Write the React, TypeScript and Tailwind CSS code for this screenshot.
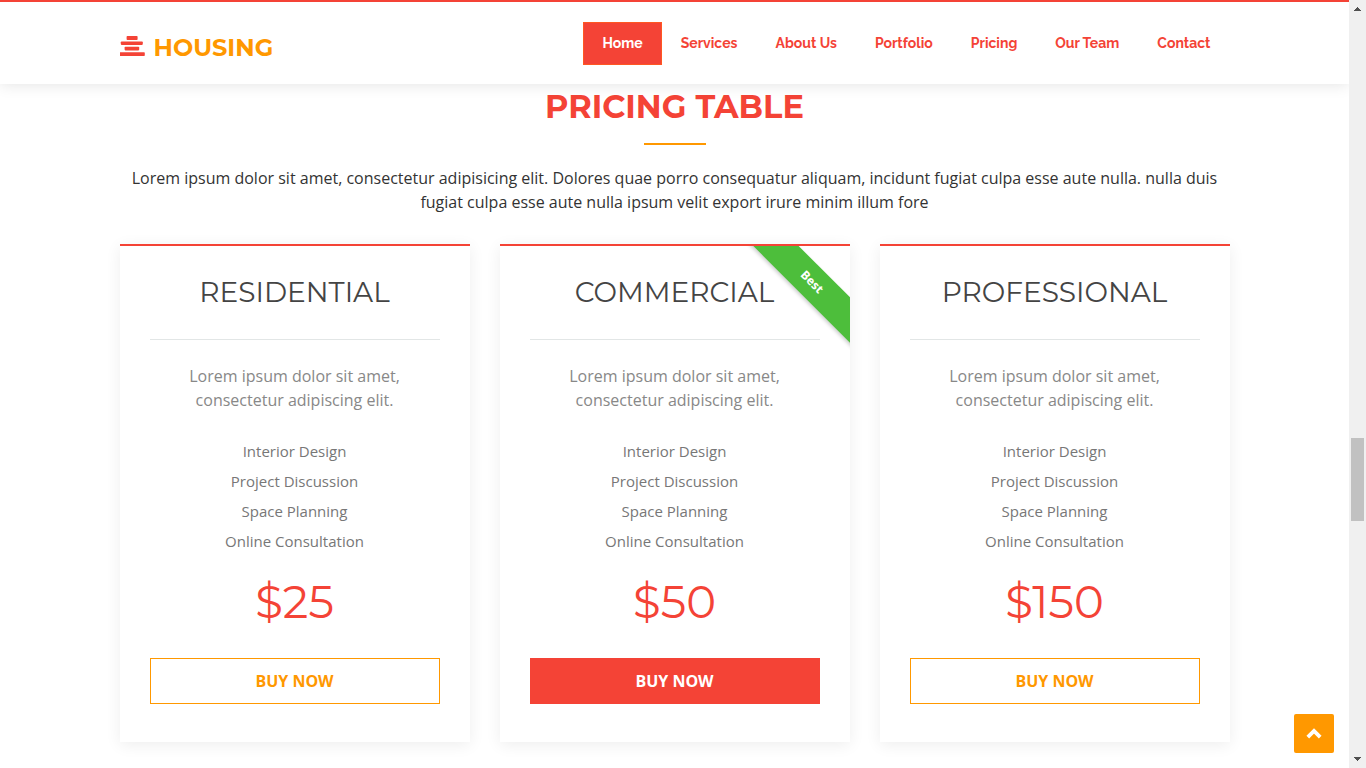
import React from "react";

const navItems = ["Home", "Services", "About Us", "Portfolio", "Pricing", "Our Team", "Contact"];

const features = ["Interior Design", "Project Discussion", "Space Planning", "Online Consultation"];

type Plan = { name: string; price: string; best?: boolean };

const plans: Plan[] = [
  { name: "RESIDENTIAL", price: "$25" },
  { name: "COMMERCIAL", price: "$50", best: true },
  { name: "PROFESSIONAL", price: "$150" },
];

function LogoIcon() {
  return (
    <svg width="26" height="22" viewBox="0 0 26 22" fill="#f44336" aria-hidden="true">
      <rect x="6.6" y="0" width="11" height="4" rx="0.8" />
      <rect x="0.8" y="5.5" width="22" height="3.4" rx="0.8" />
      <rect x="4.6" y="10.8" width="14.6" height="3.6" rx="0.8" />
      <rect x="-0.6" y="16.2" width="25.4" height="3.8" rx="0.8" />
    </svg>
  );
}

function Header() {
  return (
    <header className="relative z-10 border-t-2 border-[#f44336] bg-white shadow-[0_0_15px_rgba(0,0,0,0.12)]">
      <div className="mx-auto flex h-[82px] max-w-[1110px] items-center justify-between">
        <a href="#home" className="flex items-center gap-2 pt-2 text-[#ff9800]">
          <LogoIcon />
          <span className="pt-px font-['Montserrat','Inter',sans-serif] text-2xl leading-8 font-bold">HOUSING</span>
        </a>
        <nav aria-label="Main">
          <ul className="flex font-['Raleway','Lato',sans-serif] text-[14px] leading-[23px] font-bold">
            {navItems.map((item, i) => (
              <li key={item}>
                <a
                  href={"#" + item.toLowerCase().replace(" ", "-")}
                  className={
                    i === 0
                      ? "block border border-[#ff5722] bg-[#f44336] px-[18px] py-[9px] text-white"
                      : "block border border-transparent px-[18px] py-[9px] text-[#f44336]"
                  }
                >
                  {item}
                </a>
              </li>
            ))}
          </ul>
        </nav>
      </div>
    </header>
  );
}

function PlanCard({ name, price, best }: Plan) {
  return (
    <article className="relative flex-1 overflow-hidden border-t-2 border-[#f44336] bg-white px-[30px] pt-7 pb-[38px] text-center shadow-[0_3px_15px_rgba(0,0,0,0.07)]">
      {best && (
        <span className="absolute top-5 -right-[62px] w-[200px] rotate-45 bg-[#4dbe3b] text-[12px] leading-8 font-bold text-white shadow-[0_2px_4px_rgba(0,0,0,0.2)]">
          Best
        </span>
      )}
      <h3 className="border-b border-[#e2e6e6] pb-[29px] font-['Montserrat','Inter',sans-serif] text-[28px] leading-9 font-normal text-[#444444]">
        {name}
      </h3>
      <p className="mx-auto mt-6 max-w-[230px] text-base leading-6 text-[#888888]">
        Lorem ipsum dolor sit amet, consectetur adipiscing elit.
      </p>
      <ul className="mt-6 text-[15px] leading-[30px] text-[#777777]">
        {features.map((f) => (
          <li key={f}>{f}</li>
        ))}
      </ul>
      <p className="mt-[18px] font-['Montserrat','Inter',sans-serif] text-[45px] leading-[56px] font-normal text-[#f44336]">
        {price}
      </p>
      <button
        type="button"
        className={
          best
            ? "mt-7 h-[46px] w-full border border-[#f44336] bg-[#f44336] text-base font-bold text-white"
            : "mt-7 h-[46px] w-full border border-[#ff9800] bg-white text-base font-bold text-[#ff9800]"
        }
      >
        BUY NOW
      </button>
    </article>
  );
}

function Scrollbar() {
  return (
    <div className="sticky top-0 z-20 flex h-screen w-[17px] shrink-0 flex-col items-center bg-[#f0f0f0]" aria-hidden="true">
      <svg width="17" height="17" viewBox="0 0 17 17" fill="#505050" shapeRendering="crispEdges">
        <path d="M8 7h1v1h1v1h1v1h1v1H5v-1h1V9h1V8h1z" />
      </svg>
      <div className="grow-[421]" />
      <div className="h-[83px] w-[13px] bg-[#c1c1c1]" />
      <div className="grow-[230]" />
      <svg width="17" height="17" viewBox="0 0 17 17" fill="#505050" shapeRendering="crispEdges">
        <path d="M5 6h7v1h-1v1h-1v1H9v1H8V9H7V8H6V7H5z" />
      </svg>
    </div>
  );
}

export default function App() {
  return (
    <div className="flex bg-white font-['Open_Sans',sans-serif]">
      <div className="min-h-screen min-w-0 flex-1">
        <Header />
        <main className="mx-auto max-w-[1110px] pb-[26px]">
          <section id="pricing">
            <h2 className="pt-px text-center font-['Montserrat','Inter',sans-serif] text-[32px] leading-[44px] font-bold text-[#f44336]">
              PRICING TABLE
            </h2>
            <div className="mx-auto mt-[14px] h-0.5 w-[62px] bg-[#ff9800]" />
            <p className="mt-[21px] text-center text-base leading-6 text-[#333333]">
              Lorem ipsum dolor sit amet, consectetur adipisicing elit. Dolores quae porro consequatur aliquam, incidunt
              fugiat culpa esse aute nulla. nulla duis fugiat culpa esse aute nulla ipsum velit export irure minim illum
              fore
            </p>
            <div className="mt-[30px] flex gap-[30px]">
              {plans.map((plan) => (
                <PlanCard key={plan.name} {...plan} />
              ))}
            </div>
          </section>
        </main>
      </div>
      <Scrollbar />
      <a
        href="#home"
        aria-label="Back to top"
        className="fixed right-8 bottom-[15px] flex h-[39px] w-10 items-center justify-center rounded-xs bg-[#ff9800]"
      >
        <svg width="16" height="12" viewBox="0 0 16 12" fill="none" stroke="#ffffff" strokeWidth="3.8" aria-hidden="true">
          <path d="M1.8 9.2 8 3l6.2 6.2" />
        </svg>
      </a>
    </div>
  );
}
